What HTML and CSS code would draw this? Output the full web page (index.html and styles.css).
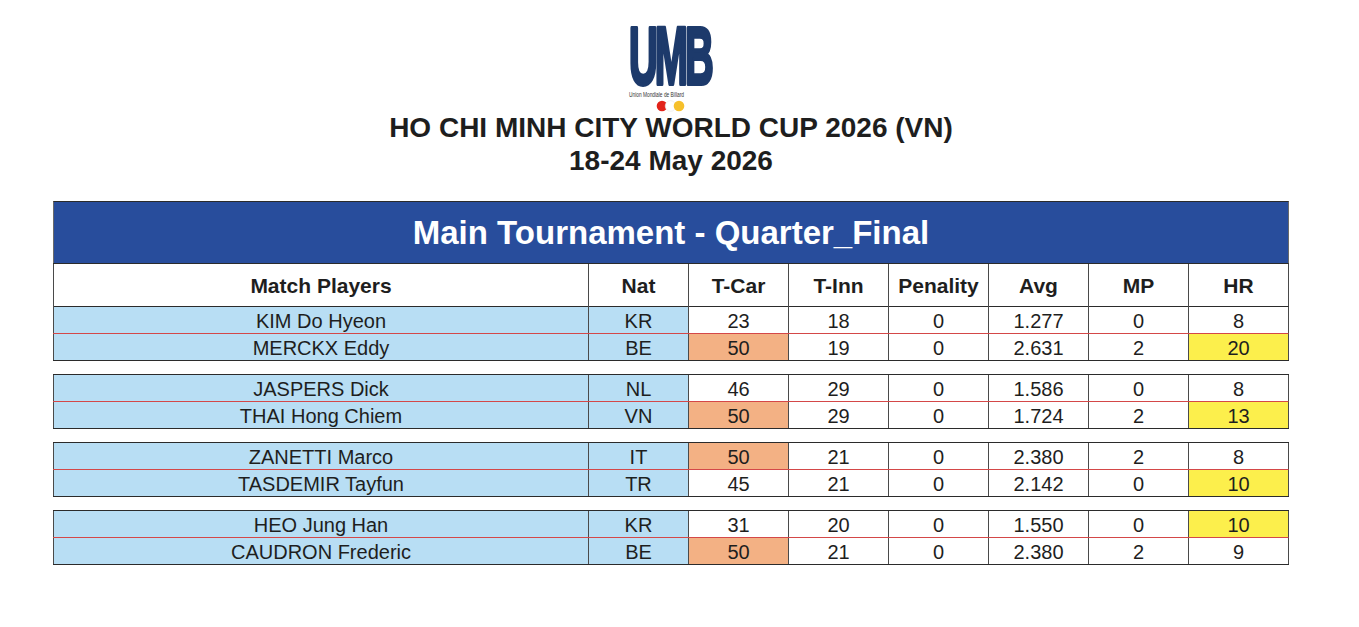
FILE: index.html
```html
<!DOCTYPE html>
<html lang="en">
<head>
<meta charset="utf-8">
<title>HO CHI MINH CITY WORLD CUP 2026 (VN) - Quarter Final</title>
<link rel="stylesheet" href="styles.css">
</head>
<body>
<div class="page">
  <header class="brand">
    <svg class="logo" width="100" height="101" viewBox="0 0 100 101" aria-label="UMB Union Mondiale de Billard">
      <text class="logo-mark" transform="translate(8 74) scale(0.97 2)" font-size="41" letter-spacing="-3">UMB</text>
      <text class="logo-sub" x="8" y="87" font-size="6.4" textLength="55" lengthAdjust="spacingAndGlyphs">Union Mondiale de Billard</text>
      <circle cx="41" cy="96" r="5.3" fill="#e2231a"/>
      <circle cx="49.5" cy="96" r="5.3" fill="#ffffff" stroke="#e6e6e6" stroke-width="0.6"/>
      <circle cx="58" cy="96" r="5.3" fill="#f6c02b"/>
    </svg>
    <h1 class="event">HO CHI MINH CITY WORLD CUP 2026 (VN)<br>18-24 May 2026</h1>
  </header>

  <section class="results">
    <div class="title">Main Tournament - Quarter_Final</div>
    <div class="row head">
      <div class="cell">Match Players</div>
      <div class="cell">Nat</div>
      <div class="cell">T-Car</div>
      <div class="cell">T-Inn</div>
      <div class="cell">Penality</div>
      <div class="cell">Avg</div>
      <div class="cell">MP</div>
      <div class="cell">HR</div>
    </div>

    <div class="match first">
      <div class="row">
        <div class="cell player">KIM Do Hyeon</div>
        <div class="cell nat">KR</div>
        <div class="cell">23</div>
        <div class="cell">18</div>
        <div class="cell">0</div>
        <div class="cell">1.277</div>
        <div class="cell">0</div>
        <div class="cell">8</div>
      </div>
      <div class="row">
        <div class="cell player">MERCKX Eddy</div>
        <div class="cell nat">BE</div>
        <div class="cell win">50</div>
        <div class="cell">19</div>
        <div class="cell">0</div>
        <div class="cell">2.631</div>
        <div class="cell">2</div>
        <div class="cell best">20</div>
      </div>
    </div>

    <div class="match">
      <div class="row">
        <div class="cell player">JASPERS Dick</div>
        <div class="cell nat">NL</div>
        <div class="cell">46</div>
        <div class="cell">29</div>
        <div class="cell">0</div>
        <div class="cell">1.586</div>
        <div class="cell">0</div>
        <div class="cell">8</div>
      </div>
      <div class="row">
        <div class="cell player">THAI Hong Chiem</div>
        <div class="cell nat">VN</div>
        <div class="cell win">50</div>
        <div class="cell">29</div>
        <div class="cell">0</div>
        <div class="cell">1.724</div>
        <div class="cell">2</div>
        <div class="cell best">13</div>
      </div>
    </div>

    <div class="match">
      <div class="row">
        <div class="cell player">ZANETTI Marco</div>
        <div class="cell nat">IT</div>
        <div class="cell win">50</div>
        <div class="cell">21</div>
        <div class="cell">0</div>
        <div class="cell">2.380</div>
        <div class="cell">2</div>
        <div class="cell">8</div>
      </div>
      <div class="row">
        <div class="cell player">TASDEMIR Tayfun</div>
        <div class="cell nat">TR</div>
        <div class="cell">45</div>
        <div class="cell">21</div>
        <div class="cell">0</div>
        <div class="cell">2.142</div>
        <div class="cell">0</div>
        <div class="cell best">10</div>
      </div>
    </div>

    <div class="match">
      <div class="row">
        <div class="cell player">HEO Jung Han</div>
        <div class="cell nat">KR</div>
        <div class="cell">31</div>
        <div class="cell">20</div>
        <div class="cell">0</div>
        <div class="cell">1.550</div>
        <div class="cell">0</div>
        <div class="cell best">10</div>
      </div>
      <div class="row">
        <div class="cell player">CAUDRON Frederic</div>
        <div class="cell nat">BE</div>
        <div class="cell win">50</div>
        <div class="cell">21</div>
        <div class="cell">0</div>
        <div class="cell">2.380</div>
        <div class="cell">2</div>
        <div class="cell">9</div>
      </div>
    </div>
  </section>
</div>
</body>
</html>
```

FILE: styles.css
```css
* {
  box-sizing: border-box;
}

body {
  margin: 0;
  background: #ffffff;
  font-family: "Liberation Sans", Arial, sans-serif;
  color: #1e1e1e;
}

.page {
  width: 1236px;
  margin-left: 53px;
}

.brand {
  display: flex;
  flex-direction: column;
  align-items: center;
  padding-top: 10px;
}

.logo {
  display: block;
  overflow: visible;
}

.logo-mark {
  font-family: "Liberation Sans", Arial, sans-serif;
  font-weight: bold;
  fill: #1d3a6b;
  stroke: #1d3a6b;
  stroke-width: 2;
  stroke-linejoin: round;
}

.logo-sub {
  font-family: "Liberation Sans", Arial, sans-serif;
  fill: #333333;
}

.event {
  margin: 0;
  font-size: 28px;
  line-height: 33px;
  font-weight: bold;
  text-align: center;
  color: #1e1e1e;
}

.results {
  margin-top: 24px;
}

.title {
  height: 62px;
  background: #284d9c;
  border-top: 1px solid #2b2b2b;
  border-left: 1px solid #6a6a6a;
  border-right: 1px solid #6a6a6a;
  color: #ffffff;
  font-size: 33px;
  font-weight: bold;
  line-height: 61px;
  text-align: center;
}

.row {
  display: grid;
  grid-template-columns: 535px repeat(7, 100px);
  border-right: 1px solid #4a4a4a;
}

.cell {
  border-left: 1px solid #4a4a4a;
  text-align: center;
  white-space: nowrap;
}

.head {
  height: 44px;
  border-top: 1px solid #2b2b2b;
  border-bottom: 1px solid #2b2b2b;
}

.head .cell {
  font-size: 21px;
  font-weight: bold;
  line-height: 43px;
}

.match {
  border-top: 1px solid #2b2b2b;
  border-bottom: 1px solid #2b2b2b;
  margin-top: 13px;
}

.match.first {
  border-top: 0;
  margin-top: 0;
}

.match .row {
  height: 26px;
}

.match .row:first-child {
  height: 27px;
  border-bottom: 1px solid #d44848;
}

.match .cell {
  font-size: 20px;
  line-height: 24px;
  padding-top: 2px;
  background: #ffffff;
}

.match .cell.player,
.match .cell.nat {
  background: #b8def4;
}

.match .cell.win {
  background: #f3b184;
}

.match .cell.best {
  background: #fcef4c;
}
```
